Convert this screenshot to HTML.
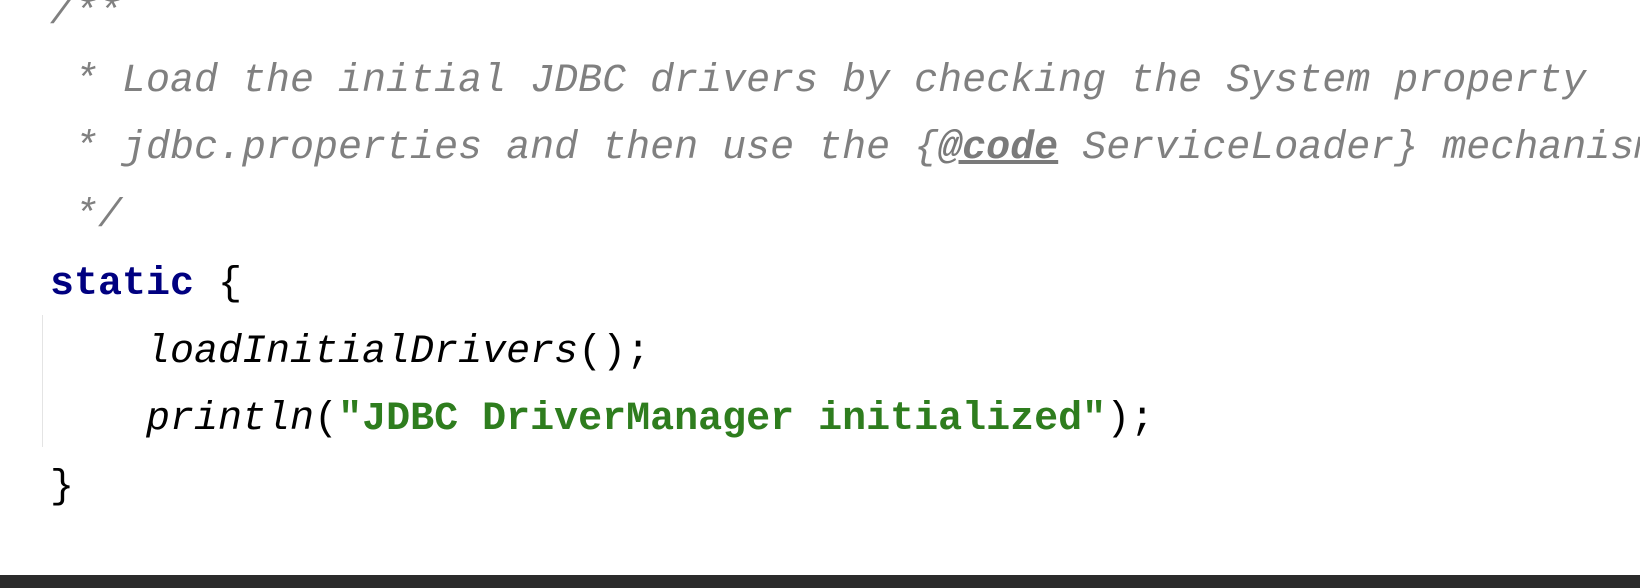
<!DOCTYPE html>
<html><head><style>
html,body{margin:0;padding:0;width:1640px;height:588px;overflow:hidden;background:#fff;position:relative}
pre{margin:0;position:absolute;left:50px;top:-20px;font-family:"Liberation Mono",monospace;font-size:40px;line-height:67.7px;color:#000}
.c{color:#808080;font-style:italic}
.k{color:#000080;font-weight:bold}
.s{color:#2e7d1e;font-weight:bold}
.m{font-style:italic}
.u{text-decoration:underline;font-weight:bold;color:#7a7a7a}
.g{position:absolute;left:42px;top:315px;width:1px;height:132px;background:#e4e4e4}
.bar{position:absolute;left:0;top:575px;width:1640px;height:13px;background:#2b2b2b}
</style></head><body>
<div class="g"></div>
<pre><span class="c">/**
 * Load the initial JDBC drivers by checking the System property
 * jdbc.properties and then use the {<span class="u">@code</span> ServiceLoader} mechanism
 */</span>
<span class="k">static</span> {
    <span class="m">loadInitialDrivers</span>();
    <span class="m">println</span>(<span class="s">"JDBC DriverManager initialized"</span>);
}</pre>
<div class="bar"></div>
</body></html>
